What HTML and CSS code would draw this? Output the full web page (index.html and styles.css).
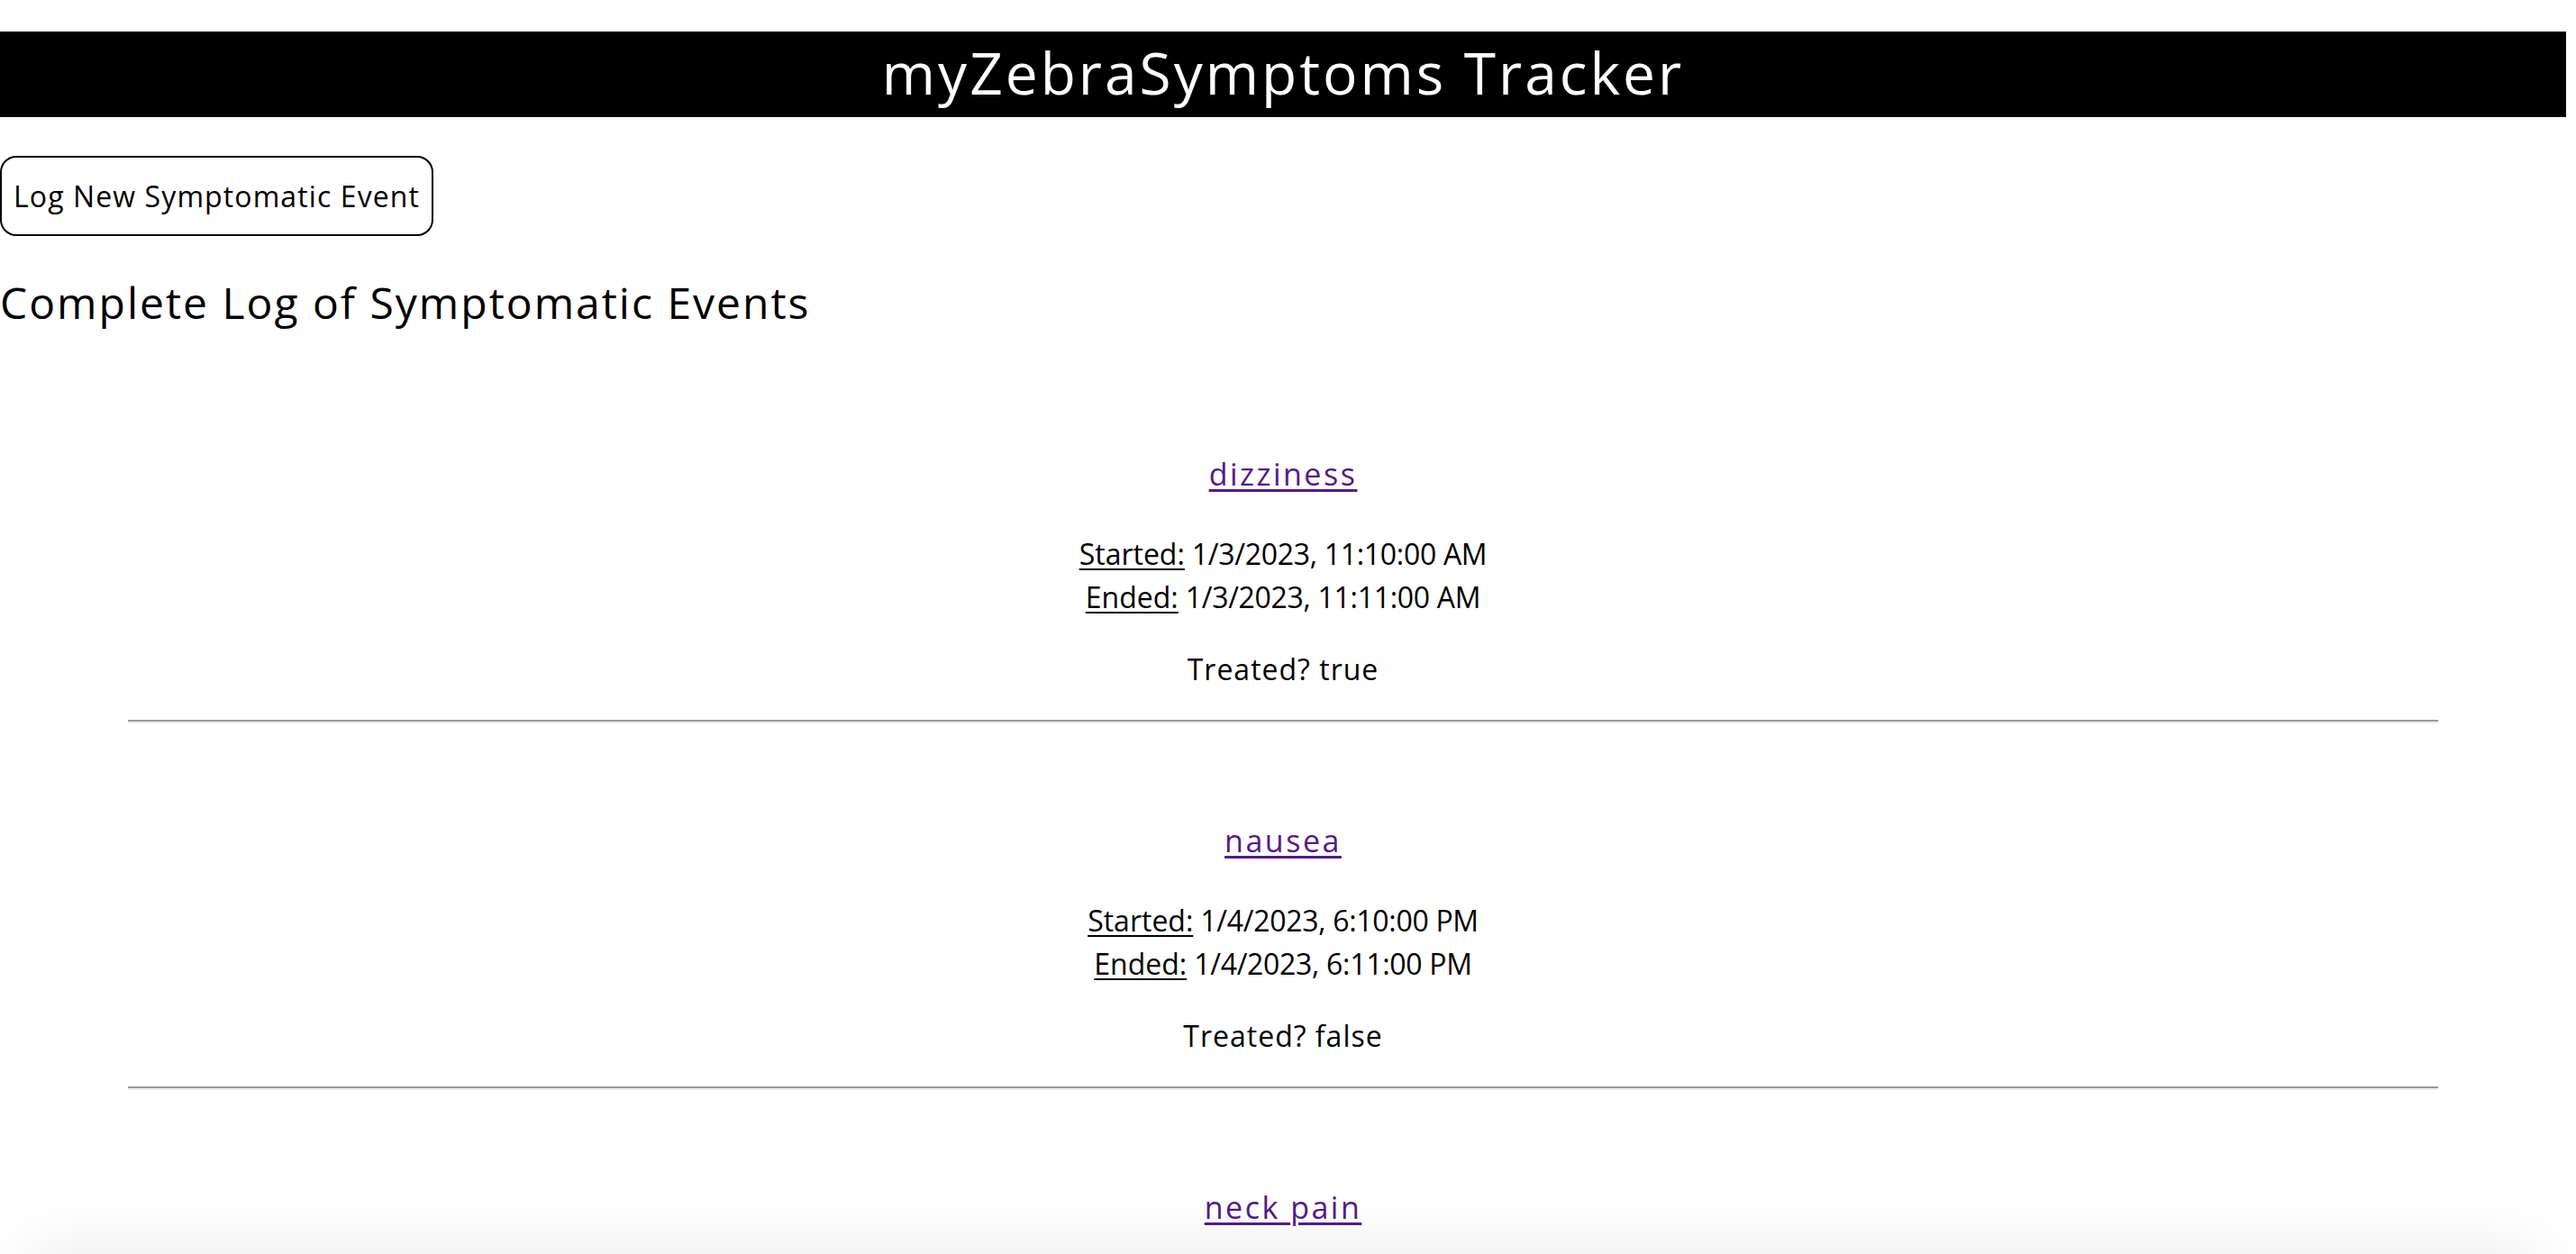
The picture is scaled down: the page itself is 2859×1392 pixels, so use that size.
FILE: index.html
```html
<!DOCTYPE html>
<html lang="en">
<head>
<meta charset="utf-8">
<title>myZebraSymptoms Tracker</title>
<link rel="stylesheet" href="styles.css">
</head>
<body>
<div class="page">
<header class="topbar">
  <h1 class="title">myZebraSymptoms Tracker</h1>
</header>
<main class="content">
  <button class="new-btn" type="button">Log New Symptomatic Event</button>
  <h2 class="log-heading">Complete Log of Symptomatic Events</h2>
  <section class="log">
    <article class="event">
      <p class="event-name"><a class="event-link" href="#">dizziness</a></p>
      <p class="event-times"><span class="label">Started:</span> 1/3/2023, 11:10:00 AM<br><span class="label">Ended:</span> 1/3/2023, 11:11:00 AM</p>
      <p class="event-treated">Treated? true</p>
      <hr class="divider">
    </article>
    <article class="event">
      <p class="event-name"><a class="event-link" href="#">nausea</a></p>
      <p class="event-times"><span class="label">Started:</span> 1/4/2023, 6:10:00 PM<br><span class="label">Ended:</span> 1/4/2023, 6:11:00 PM</p>
      <p class="event-treated">Treated? false</p>
      <hr class="divider">
    </article>
    <article class="event">
      <p class="event-name"><a class="event-link" href="#">neck pain</a></p>
      <p class="event-times"><span class="label">Started:</span> 1/5/2023, 9:00:00 AM<br><span class="label">Ended:</span> 1/5/2023, 9:30:00 AM</p>
      <p class="event-treated">Treated? true</p>
      <hr class="divider">
    </article>
  </section>
</main>
</div>
<div class="bottom-fade"></div>
</body>
</html>
```
FILE: styles.css
```css
html, body {
  margin: 0;
  padding: 0;
  background: #fff;
}

body {
  font-family: "Open Sans", "Noto Sans", sans-serif;
  font-size: 32px;
  line-height: 48px;
  color: #000;
}

.page {
  margin-right: 11px;
}

.topbar {
  margin-top: 35px;
  height: 95px;
  background: #000;
  display: flex;
  align-items: center;
  justify-content: center;
}

.title {
  margin: 0;
  font-size: 64px;
  font-weight: 400;
  line-height: 64px;
  color: #fff;
  letter-spacing: 3px;
  padding-bottom: 4px;
}

.new-btn {
  display: block;
  margin: 43px 0 0 0;
  height: 89px;
  padding: 0 13px;
  border: 2px solid #000;
  border-radius: 18px;
  background: #fff;
  color: #000;
  font-family: inherit;
  font-size: 32px;
  letter-spacing: 1.1px;
  cursor: pointer;
}

.log-heading {
  margin: 38px 0 0 0;
  font-size: 48px;
  line-height: 72px;
  font-weight: 400;
  letter-spacing: 2px;
}

.log {
  margin-top: 130px;
  text-align: center;
}

.event p {
  margin: 0;
}

.event .event-name {
  font-size: 34px;
  letter-spacing: 2.5px;
}

.event .event-times {
  margin-top: 41px;
  letter-spacing: -0.3px;
}

.event .event-treated {
  margin-top: 32px;
  letter-spacing: 1px;
}

.event-link {
  color: #551a8b;
  text-decoration: underline;
  text-decoration-thickness: 3px;
  text-underline-offset: 4px;
}

.label {
  text-decoration: underline;
  text-decoration-thickness: 2px;
  text-underline-offset: 4px;
  letter-spacing: 0;
}

.divider {
  width: 90%;
  margin: 32px auto 106px auto;
  height: 0;
  border: 0;
  border-top: 2px solid #9a9a9a;
  border-bottom: 2px solid #eeeeee;
}

.bottom-fade {
  position: fixed;
  left: 30px;
  right: 40px;
  bottom: -50px;
  height: 50px;
  border-radius: 50px;
  box-shadow: 0 0 70px rgba(0, 0, 0, 0.10);
  pointer-events: none;
}
```
